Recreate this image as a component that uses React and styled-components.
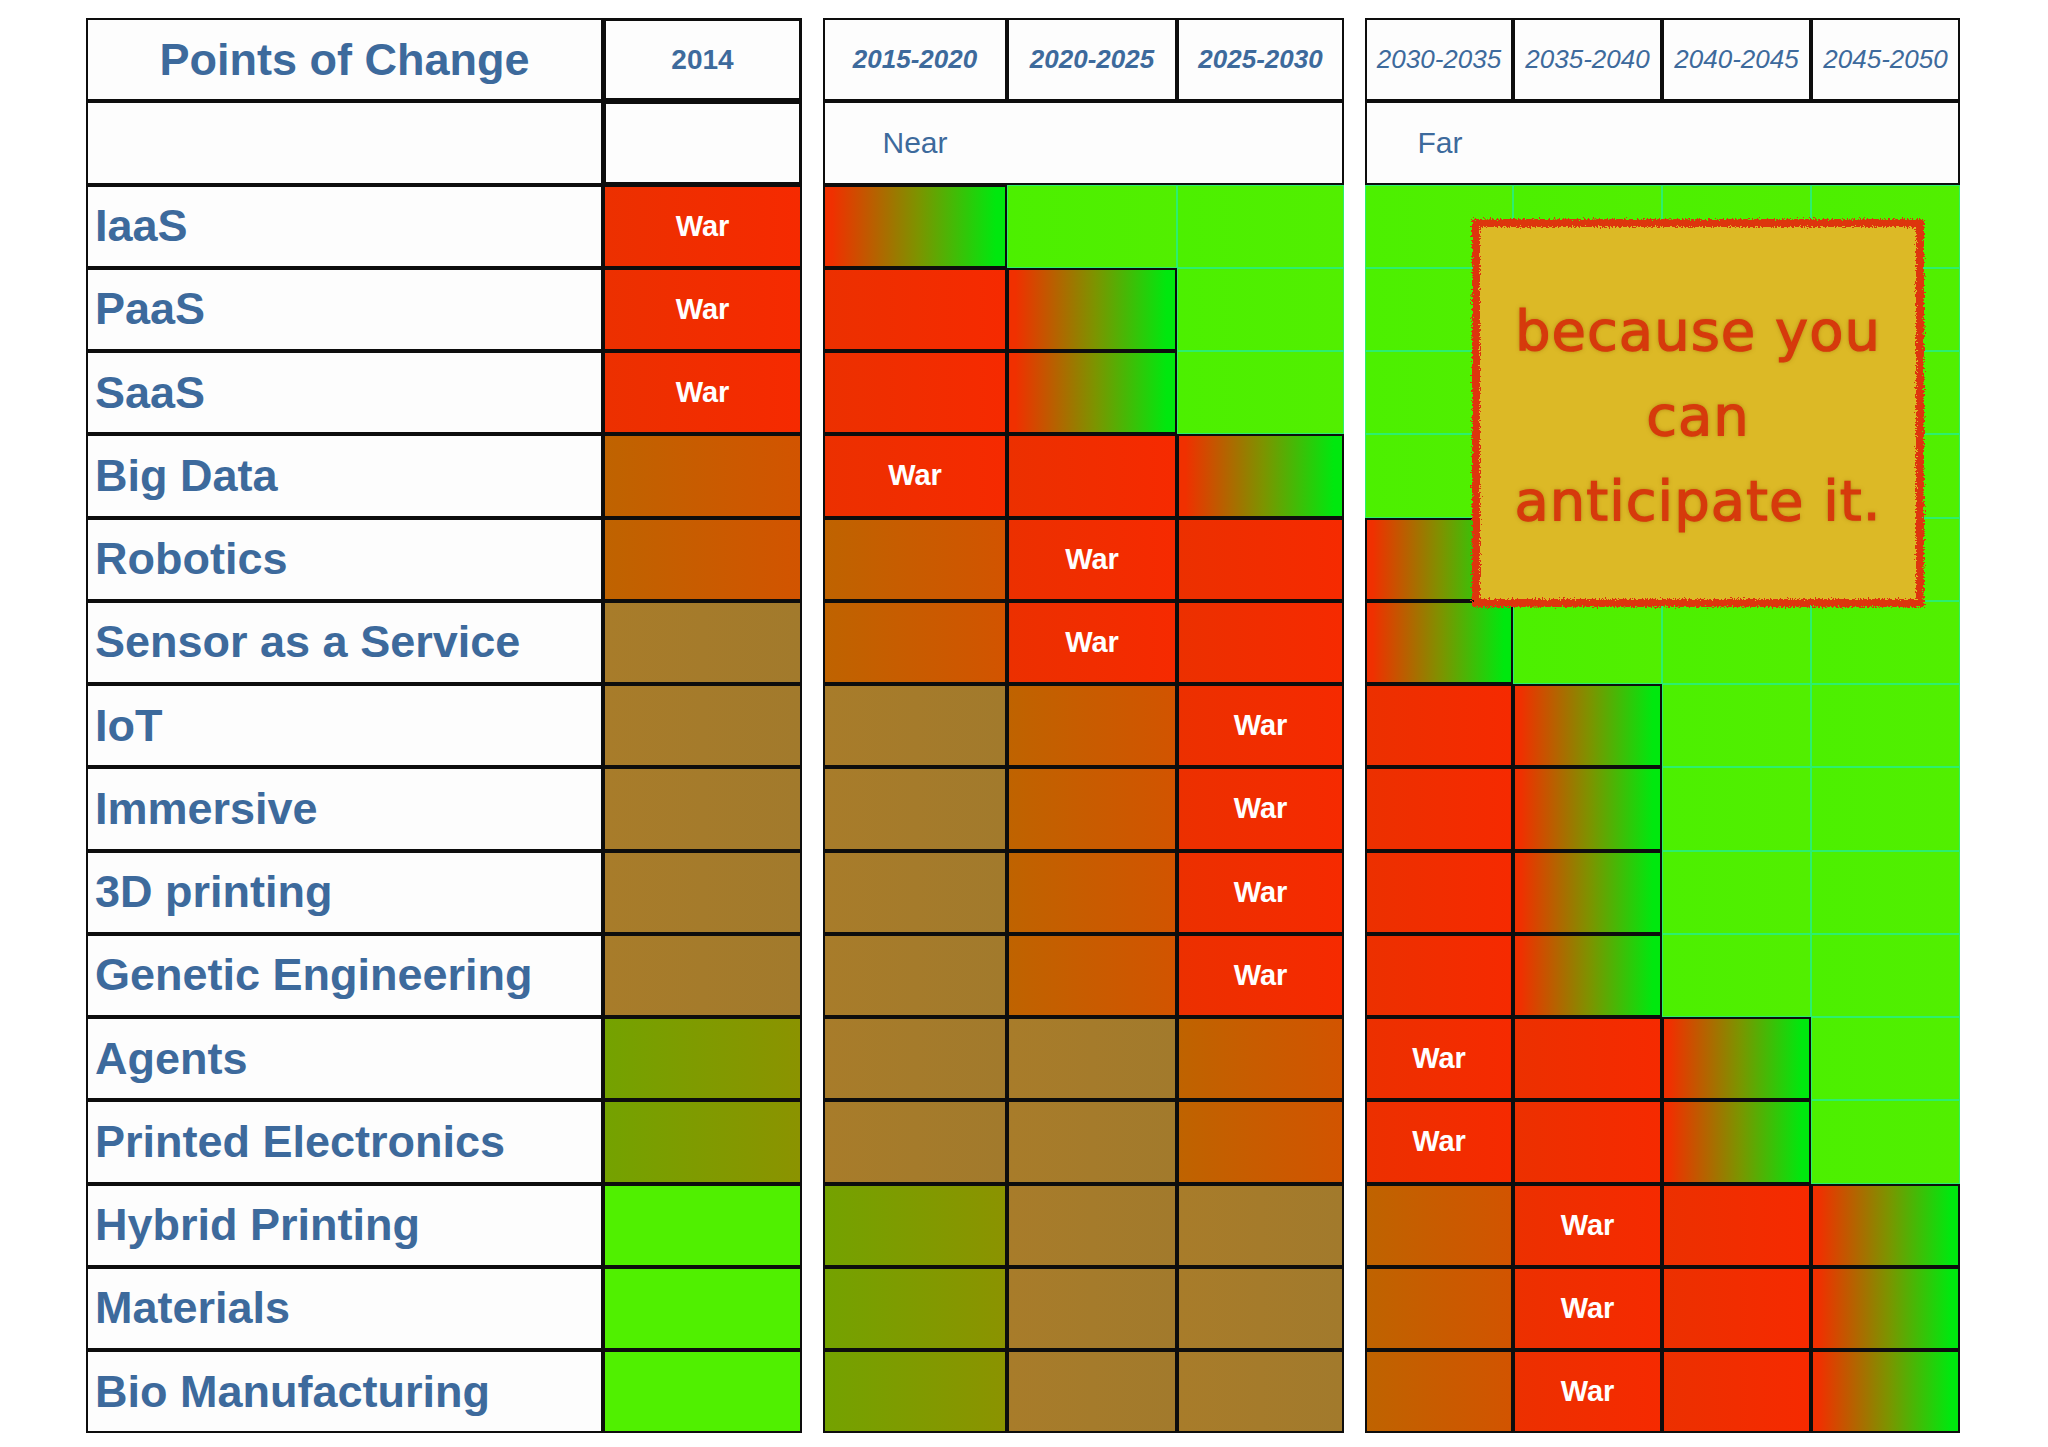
import React from 'react'
import styled, { createGlobalStyle } from 'styled-components'

const GlobalStyle = createGlobalStyle`
  body {
    margin: 0;
    background: #ffffff;
    font-family: "Liberation Sans", Arial, sans-serif;
  }
`

const ink = '#3d6a9c'
const line = '#0d0d0d'

const fills = {
    r: 'linear-gradient(to right, #ec3000, #f62a00)',
    o: 'linear-gradient(to right, #bf6300, #d25400)',
    b: 'linear-gradient(to right, #a87c2a, #a27a2c)',
    m: 'linear-gradient(to right, #74a200, #8b9300)',
    l: '#50f000',
    f: 'linear-gradient(to right, #f03000 4%, #7c9400 52%, #00e80e 95%)',
    g: 'linear-gradient(to right, #4cf000, #52ef00)',
}

const Page = styled.main`
  padding: 18px 0 16px 86px;
  display: flex;
  gap: 21px;
  align-items: flex-start;
`

const Panel = styled.section`
  position: relative;
  display: grid;
  grid-template-columns: ${p => p.$cols.map(c => `${c}px`).join(' ')};
  grid-auto-rows: 83.25px;
`

const HeadCell = styled.div`
  box-sizing: border-box;
  border: ${p => (p.$heavy ? 3 : 2)}px solid ${line};
  background: #fdfdfd;
  color: ${ink};
  display: flex;
  align-items: center;
  justify-content: center;
  font-size: ${p => p.$size || 26}px;
  font-weight: ${p => (p.$light ? 400 : 700)};
  font-style: ${p => (p.$italic ? 'italic' : 'normal')};
  white-space: nowrap;
  grid-column: span ${p => p.$span || 1};
`

const SpanHead = styled(HeadCell)`
  justify-content: flex-start;
  font-size: 30px;
  font-weight: 400;
`

const SpanText = styled.span`
  width: ${p => p.$w}px;
  text-align: center;
`

const Label = styled.div`
  box-sizing: border-box;
  border: 2px solid ${line};
  background: #fdfdfd;
  color: ${ink};
  display: flex;
  align-items: center;
  padding-left: 7px;
  font-size: 45px;
  font-weight: 700;
  white-space: nowrap;
`

const Cell = styled.div`
  box-sizing: border-box;
  background: ${p => fills[p.$kind]};
  border: ${p => (p.$kind === 'g' ? `1px solid #2cef6e` : `2px solid ${line}`)};
  display: flex;
  align-items: center;
  justify-content: center;
  color: #ffffff;
  font-size: 29px;
  font-weight: 700;
`

const FilterDefs = styled.svg`
  position: absolute;
  width: 0;
  height: 0;
`

const Note = styled.div`
  position: absolute;
  left: 107px;
  top: 201px;
  width: 452px;
  height: 388px;
  display: flex;
  align-items: center;
  justify-content: center;
`

const NoteFrame = styled.div`
  position: absolute;
  inset: 0;
  background: #dcb926;
  border: 8px solid #dd3410;
  filter: url(#rough);
`

const NoteText = styled.p`
  position: relative;
  margin: 0;
  text-align: center;
  color: #d63a0c;
  font-family: "DejaVu Sans", "Liberation Sans", sans-serif;
  font-size: 56px;
  line-height: 85px;
  letter-spacing: 1px;
  -webkit-text-stroke: 1.2px #d63a0c;
  text-shadow: 0 0 4px rgba(150, 100, 10, 0.7);
  padding-top: 4px;
`

const rows = [
    ['IaaS', 'r*', 'f', 'g', 'g', 'g', 'g', 'g', 'g'],
    ['PaaS', 'r*', 'r', 'f', 'g', 'g', 'g', 'g', 'g'],
    ['SaaS', 'r*', 'r', 'f', 'g', 'g', 'g', 'g', 'g'],
    ['Big Data', 'o', 'r*', 'r', 'f', 'g', 'g', 'g', 'g'],
    ['Robotics', 'o', 'o', 'r*', 'r', 'f', 'g', 'g', 'g'],
    ['Sensor as a Service', 'b', 'o', 'r*', 'r', 'f', 'g', 'g', 'g'],
    ['IoT', 'b', 'b', 'o', 'r*', 'r', 'f', 'g', 'g'],
    ['Immersive', 'b', 'b', 'o', 'r*', 'r', 'f', 'g', 'g'],
    ['3D printing', 'b', 'b', 'o', 'r*', 'r', 'f', 'g', 'g'],
    ['Genetic Engineering', 'b', 'b', 'o', 'r*', 'r', 'f', 'g', 'g'],
    ['Agents', 'm', 'b', 'b', 'o', 'r*', 'r', 'f', 'g'],
    ['Printed Electronics', 'm', 'b', 'b', 'o', 'r*', 'r', 'f', 'g'],
    ['Hybrid Printing', 'l', 'm', 'b', 'b', 'o', 'r*', 'r', 'f'],
    ['Materials', 'l', 'm', 'b', 'b', 'o', 'r*', 'r', 'f'],
    ['Bio Manufacturing', 'l', 'm', 'b', 'b', 'o', 'r*', 'r', 'f'],
]

const nearYears = ['2015-2020', '2020-2025', '2025-2030']
const farYears = ['2030-2035', '2035-2040', '2040-2045', '2045-2050']

const renderCell = (code, key) => {
    const kind = code[0]
    return (
        <Cell key={key} $kind={kind}>
            {code.endsWith('*') ? 'War' : null}
        </Cell>
    )
}

const App = () => {
    return (
        <>
            <GlobalStyle />
            <FilterDefs aria-hidden="true">
                <filter id="rough">
                    <feTurbulence type="fractalNoise" baseFrequency="0.6" numOctaves="2" result="noise" />
                    <feDisplacementMap in="SourceGraphic" in2="noise" scale="7" />
                </filter>
            </FilterDefs>
            <Page>
                <Panel $cols={[517, 199]}>
                    <HeadCell $size={45}>Points of Change</HeadCell>
                    <HeadCell $size={28} $heavy>2014</HeadCell>
                    <HeadCell />
                    <HeadCell $heavy />
                    {rows.map(r => (
                        <React.Fragment key={r[0]}>
                            <Label>{r[0]}</Label>
                            {renderCell(r[1], 'c0')}
                        </React.Fragment>
                    ))}
                </Panel>

                <Panel $cols={[184, 170, 167]}>
                    {nearYears.map(y => (
                        <HeadCell key={y} $italic>{y}</HeadCell>
                    ))}
                    <SpanHead $span={3}>
                        <SpanText $w={180}>Near</SpanText>
                    </SpanHead>
                    {rows.map(r => r.slice(2, 5).map((c, i) => renderCell(c, `${r[0]}-n${i}`)))}
                </Panel>

                <Panel $cols={[148, 149, 149, 149]}>
                    {farYears.map(y => (
                        <HeadCell key={y} $italic $light>{y}</HeadCell>
                    ))}
                    <SpanHead $span={4}>
                        <SpanText $w={146}>Far</SpanText>
                    </SpanHead>
                    {rows.map(r => r.slice(5, 9).map((c, i) => renderCell(c, `${r[0]}-f${i}`)))}
                    <Note>
                        <NoteFrame />
                        <NoteText>
                            because you
                            <br />
                            can
                            <br />
                            anticipate it.
                        </NoteText>
                    </Note>
                </Panel>
            </Page>
        </>
    )
}

export default App
